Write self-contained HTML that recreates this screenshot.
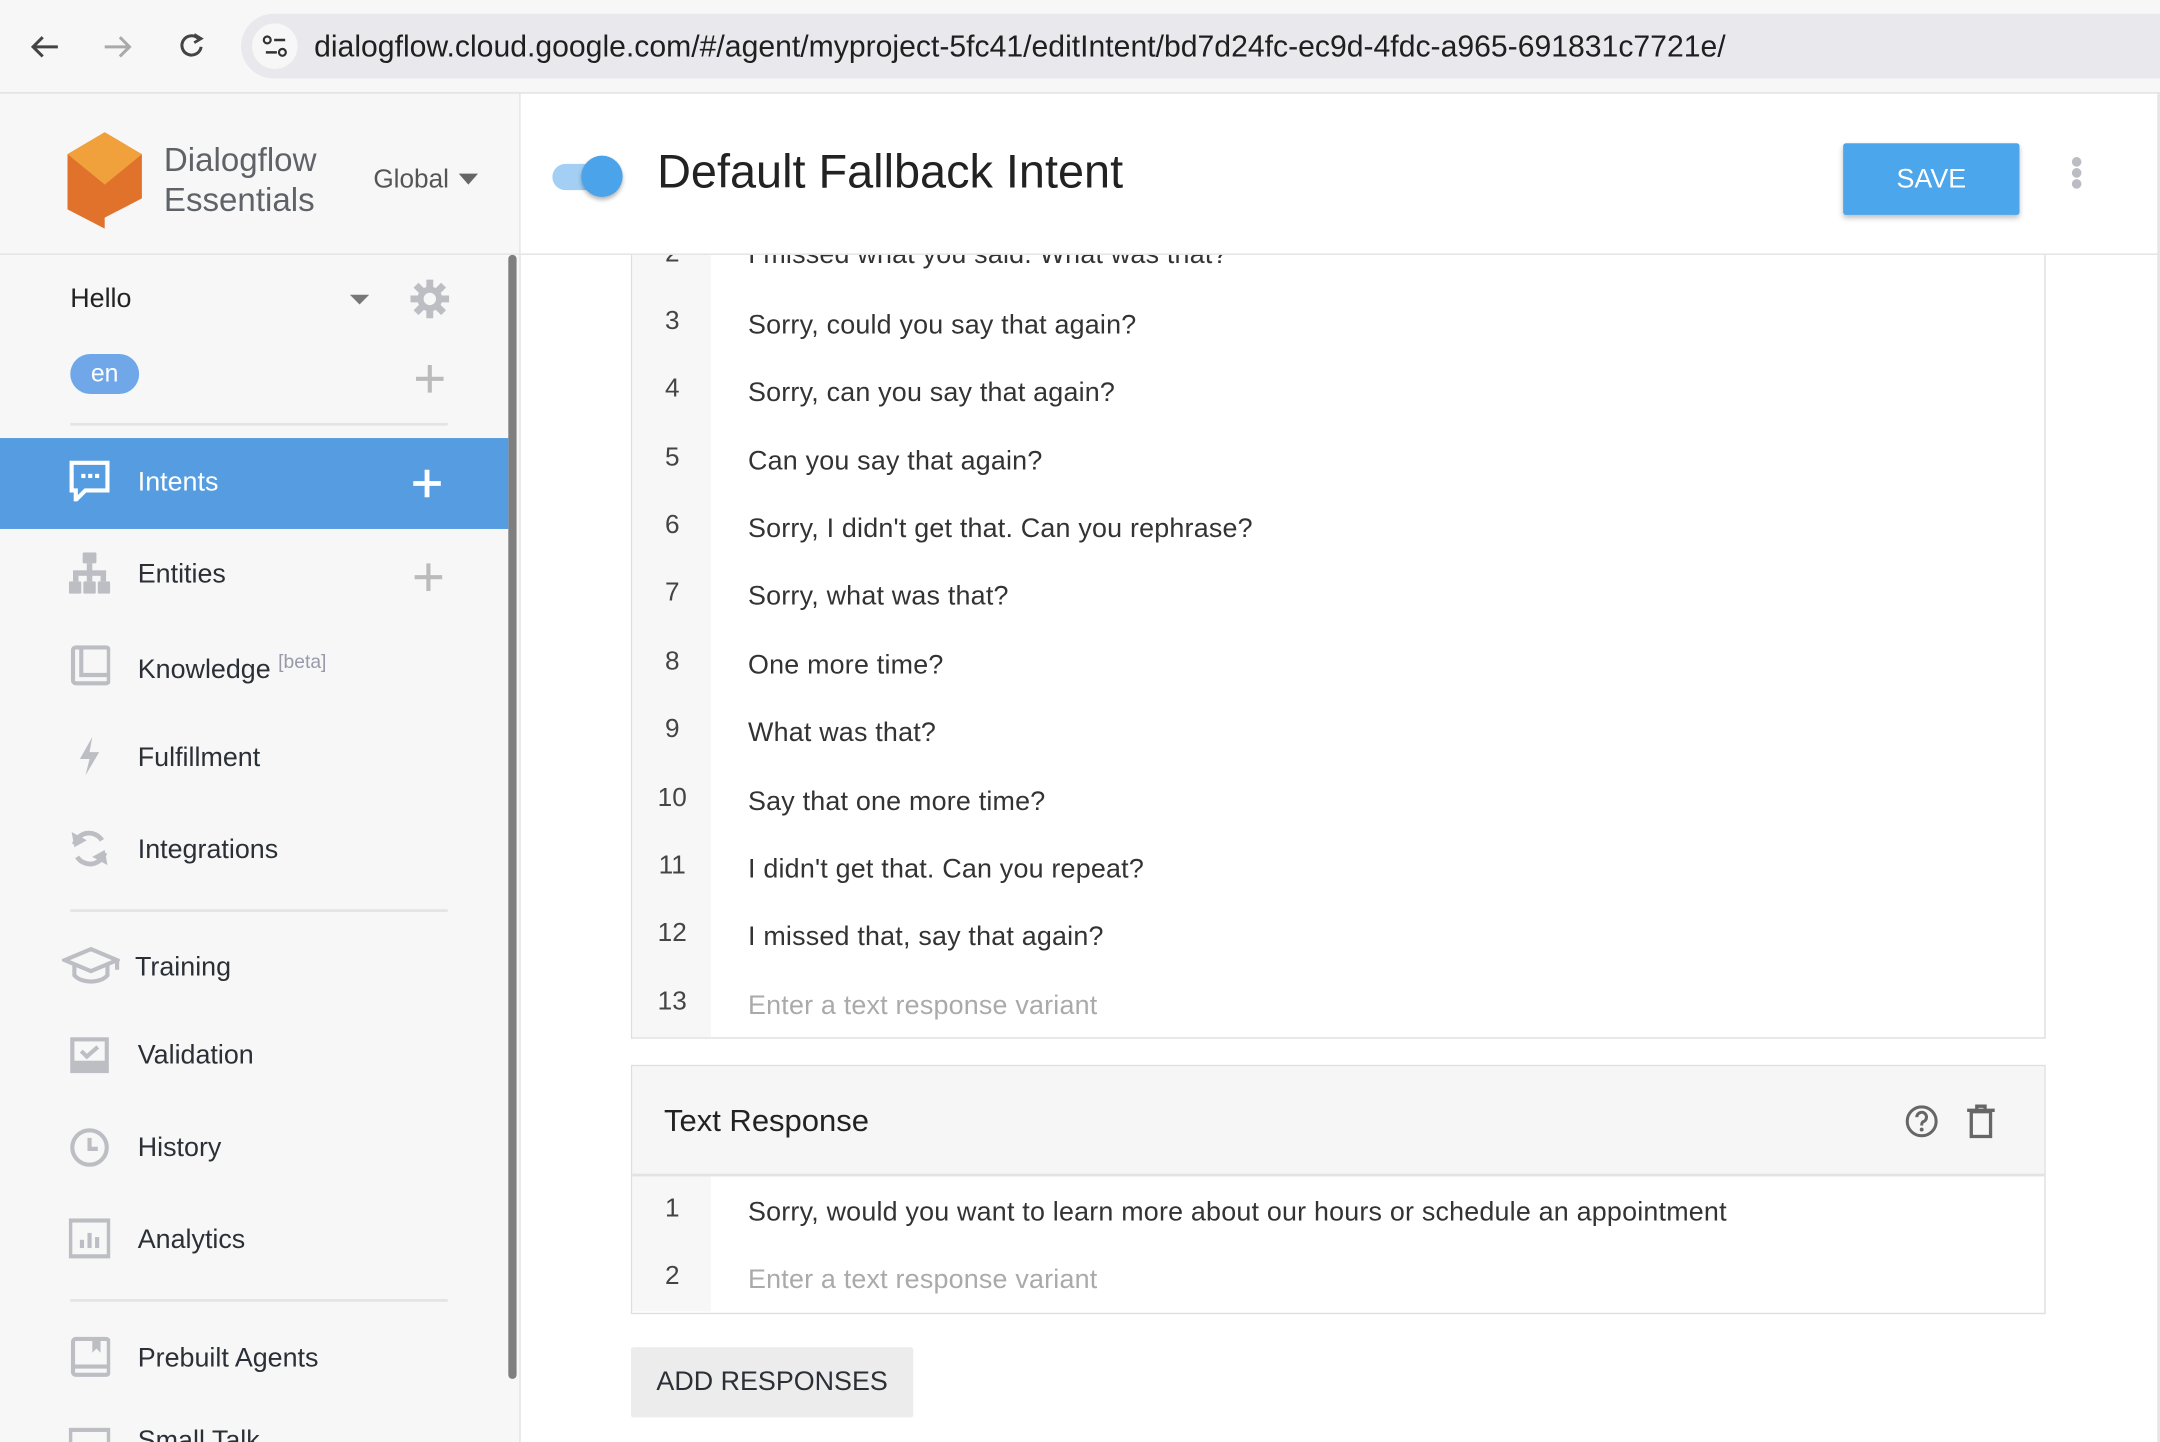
<!DOCTYPE html>
<html><head><meta charset="utf-8">
<style>
html,body{margin:0;padding:0;width:2160px;height:1442px;overflow:hidden;background:#fff;}
#s{position:absolute;left:0;top:0;width:1568px;height:1047px;transform:scale(1.37755);transform-origin:0 0;font-family:"Liberation Sans",sans-serif;color:#222;overflow:hidden;}
.a{position:absolute;}
.t{position:absolute;white-space:nowrap;}
.nav{font-size:19.5px;color:#2b2f36;left:100px;margin-top:1px;}
.ic{position:absolute;left:50px;width:30px;height:30px;}
.num{position:absolute;left:458px;width:60px;text-align:center;font-size:19px;color:#444;margin-top:2px;}
.row{position:absolute;left:543px;font-size:19.5px;letter-spacing:0.15px;color:#333;white-space:nowrap;margin-top:2px;}
.ph{color:#aaa;}
</style></head><body><div id="s">
<div class="a" style="left:0;top:0;width:1568px;height:67px;background:#f8f7f8;border-bottom:1px solid #dedede"></div>
<svg class="a" style="left:20px;top:22px" width="140" height="24" viewBox="0 0 140 24">
<path d="M22 12H4M11 5L4 12L11 19" stroke="#444" stroke-width="2.2" fill="none"/>
<path d="M56 12H74M67 5L74 12L67 19" stroke="#aaa" stroke-width="2.2" fill="none"/>
<path d="M124 6A7 7 0 1 0 126 12" stroke="#444" stroke-width="2.2" fill="none"/><path d="M121 3L126 6L121 9" stroke="#444" stroke-width="2" fill="none"/>
</svg>
<div class="a" style="left:175px;top:10px;width:1420px;height:47px;background:#e9e8ed;border-radius:24px"></div>
<div class="a" style="left:183px;top:17px;width:33px;height:33px;background:#f8f7f8;border-radius:50%"></div>
<svg class="a" style="left:190px;top:24px" width="20" height="20" viewBox="0 0 20 20"><circle cx="4" cy="5" r="2.5" stroke="#333" stroke-width="1.6" fill="none"/><path d="M9 5H17M3 14H11" stroke="#333" stroke-width="1.8"/><circle cx="15" cy="14" r="2.5" stroke="#333" stroke-width="1.6" fill="none"/></svg>
<div class="t" style="left:228px;top:21px;font-size:21.9px;color:#1f1f1f">dialogflow.cloud.google.com/#/agent/myproject-5fc41/editIntent/bd7d24fc-ec9d-4fdc-a965-691831c7721e/</div>

<div class="a" style="left:0;top:68px;width:377px;height:990px;background:#f7f7f7;border-right:1px solid #e2e2e2"></div>
<div class="a" style="left:0;top:184px;width:377px;height:1px;background:#e2e2e2"></div>
<svg class="a" style="left:48px;top:96px" width="56" height="70" viewBox="0 0 56 70">
<path d="M28 0L55 16V48L28 62V70L1 56V16Z" fill="#e0722c"/>
<path d="M28 0L55 16L28 38L1 16Z" fill="#f0a13c"/>
<path d="M1 16L28 38V62L1 48Z" fill="#e0722c"/>
</svg>
<div class="t" style="left:119px;top:102px;font-size:24px;line-height:29px;color:#5f6368">Dialogflow<br>Essentials</div>
<div class="t" style="left:271px;top:120px;font-size:19px;color:#555">Global</div>
<div class="a" style="left:333px;top:126px;border-left:7px solid transparent;border-right:7px solid transparent;border-top:8px solid #666"></div>

<div class="a" style="left:369px;top:185px;width:6px;height:816px;background:#7f7f7f;border-radius:3px"></div>

<div class="t" style="left:51px;top:206px;font-size:19.5px;color:#222">Hello</div>
<div class="a" style="left:254px;top:214px;border-left:7px solid transparent;border-right:7px solid transparent;border-top:7px solid #777"></div>
<svg class="a" style="left:296px;top:201px" width="32" height="32" viewBox="0 0 32 32"><g stroke="#bcbec4" stroke-width="5"><path d="M16 2V30M2 16H30M6 6L26 26M26 6L6 26"/></g><circle cx="16" cy="16" r="9" fill="#bcbec4"/><circle cx="16" cy="16" r="4.5" fill="#f7f7f7"/></svg>
<div class="a" style="left:51px;top:257px;width:50px;height:29px;background:#6fa7e8;border-radius:15px;color:#fff;font-size:18px;text-align:center;line-height:29px">en</div>
<svg class="a" style="left:301px;top:264px" width="22" height="22"><path d="M11 1V21M1 11H21" stroke="#bbb" stroke-width="3"/></svg>
<div class="a" style="left:51px;top:307px;width:274px;height:2px;background:#e4e4e4"></div>

<div class="a" style="left:0;top:318px;width:369px;height:66px;background:#559de0"></div>
<svg class="ic" style="top:334px" viewBox="0 0 30 30"><path d="M2 2H28V22H12L5 29V22H2Z" fill="none" stroke="#fff" stroke-width="3"/><rect x="9" y="10" width="3" height="3" fill="#fff"/><rect x="14" y="10" width="3" height="3" fill="#fff"/><rect x="19" y="10" width="3" height="3" fill="#fff"/></svg>
<div class="t nav" style="top:338px;color:#fff">Intents</div>
<svg class="a" style="left:299px;top:340px" width="22" height="22"><path d="M11 1V21M1 11H21" stroke="#fff" stroke-width="3.5"/></svg>

<svg class="ic" style="top:401px" viewBox="0 0 30 30"><g fill="#bcbec4"><rect x="10" y="0" width="10" height="8" rx="1"/><rect x="13" y="8" width="4" height="7"/><rect x="3" y="13" width="24" height="4"/><rect x="3" y="15" width="4" height="6"/><rect x="23" y="15" width="4" height="6"/><rect x="13" y="15" width="4" height="6"/><rect x="0" y="21" width="9" height="9" rx="1"/><rect x="10.5" y="21" width="9" height="9" rx="1"/><rect x="21" y="21" width="9" height="9" rx="1"/></g></svg>
<div class="t nav" style="top:405px">Entities</div>
<svg class="a" style="left:300px;top:408px" width="22" height="22"><path d="M11 1V21M1 11H21" stroke="#bbb" stroke-width="3"/></svg>

<svg class="ic" style="top:468px" viewBox="0 0 30 30"><rect x="3" y="2" width="26" height="26" rx="2" fill="none" stroke="#bcbec4" stroke-width="3"/><path d="M9 2V22H29" stroke="#bcbec4" stroke-width="3" fill="none"/></svg>
<div class="t nav" style="top:471px">Knowledge <span style="font-size:14px;color:#99a;vertical-align:7px">[beta]</span></div>

<svg class="ic" style="top:534px" viewBox="0 0 30 30"><path d="M17 1L8 17H15L12 29L22 12H15Z" fill="#bcbec4"/></svg>
<div class="t nav" style="top:538px">Fulfillment</div>

<svg class="ic" style="top:601px" viewBox="0 0 30 30"><path d="M24 9A11 11 0 0 0 4 12M6 21A11 11 0 0 0 26 18" stroke="#bcbec4" stroke-width="3.5" fill="none"/><path d="M2 3L4 14L13 9Z" fill="#bcbec4"/><path d="M28 27L26 16L17 21Z" fill="#bcbec4"/></svg>
<div class="t nav" style="top:605px">Integrations</div>
<div class="a" style="left:51px;top:660px;width:274px;height:2px;background:#e4e4e4"></div>

<svg class="a" style="left:45px;top:686px" width="42" height="30" viewBox="0 0 42 30"><path d="M21 3L2 11L21 19L40 11Z" fill="none" stroke="#bcbec4" stroke-width="3"/><path d="M9 15V22C14 28 28 28 33 22V15" fill="none" stroke="#bcbec4" stroke-width="3"/><path d="M40 11V18" stroke="#bcbec4" stroke-width="3"/></svg>
<div class="t nav" style="top:690px;left:98px">Training</div>
<svg class="ic" style="top:751px" viewBox="0 0 30 30"><rect x="1" y="2" width="28" height="26" fill="#bcbec4"/><rect x="4" y="5" width="22" height="14" fill="#f7f7f7"/><path d="M9 12L13 16L21 9" stroke="#bcbec4" stroke-width="3" fill="none"/></svg>
<div class="t nav" style="top:754px">Validation</div>
<svg class="ic" style="top:818px" viewBox="0 0 30 30"><circle cx="15" cy="15" r="12.5" fill="none" stroke="#bcbec4" stroke-width="3"/><path d="M15 8V16H21" stroke="#bcbec4" stroke-width="3" fill="none"/></svg>
<div class="t nav" style="top:821px">History</div>
<svg class="ic" style="top:884px" viewBox="0 0 30 30"><rect x="1" y="2" width="28" height="26" fill="none" stroke="#bcbec4" stroke-width="3"/><rect x="8" y="16" width="3" height="6" fill="#bcbec4"/><rect x="13.5" y="11" width="3" height="11" fill="#bcbec4"/><rect x="19" y="14" width="3" height="8" fill="#bcbec4"/></svg>
<div class="t nav" style="top:888px">Analytics</div>
<div class="a" style="left:51px;top:943px;width:274px;height:2px;background:#e4e4e4"></div>
<svg class="ic" style="top:970px" viewBox="0 0 30 30"><rect x="3" y="2" width="26" height="26" rx="2" fill="none" stroke="#bcbec4" stroke-width="3"/><path d="M3 22H29" stroke="#bcbec4" stroke-width="3"/><path d="M17 2V12L20 9L23 12V2Z" fill="#bcbec4"/></svg>
<div class="t nav" style="top:974px">Prebuilt Agents</div>
<svg class="ic" style="top:1036px" viewBox="0 0 30 30"><rect x="1" y="2" width="28" height="26" fill="none" stroke="#bcbec4" stroke-width="3"/></svg>
<div class="t nav" style="top:1034px">Small Talk</div>

<div class="a" style="left:378px;top:68px;width:1188px;height:116px;background:#fff;border-bottom:1px solid #e2e2e2;border-right:2px solid #e6e6e6;z-index:2"></div>
<div class="a" style="left:401px;top:119px;width:44px;height:19px;background:#a3cff5;border-radius:10px;z-index:3"></div>
<div class="a" style="left:422px;top:113px;width:30px;height:30px;background:#4ba3ea;border-radius:50%;box-shadow:0 2px 3px rgba(0,0,0,.3);z-index:3"></div>
<div class="t" style="left:477px;top:106px;font-size:34px;color:#222;z-index:3">Default Fallback Intent</div>
<div class="a" style="left:1338px;top:104px;width:128px;height:52px;background:#4ba6ec;border-radius:2px;box-shadow:0 2px 4px rgba(0,0,0,.25);color:#fff;font-size:19.5px;text-align:center;line-height:52px;z-index:3">SAVE</div>
<div class="a" style="left:1504px;top:114px;width:7px;height:7px;background:#bcbcc4;border-radius:50%;z-index:3"></div>
<div class="a" style="left:1504px;top:122px;width:7px;height:7px;background:#bcbcc4;border-radius:50%;z-index:3"></div>
<div class="a" style="left:1504px;top:130px;width:7px;height:7px;background:#bcbcc4;border-radius:50%;z-index:3"></div>
<div class="a" style="left:1566px;top:184px;width:2px;height:870px;background:#e6e6e6"></div>

<div class="a" style="left:458px;top:150px;width:1025px;height:603px;border:1px solid #dedede;border-top:none;background:#fff"></div>
<div class="a" style="left:459px;top:150px;width:57px;height:603px;background:#f7f7f7"></div>
<div class="num" style="top:172px">2</div><div class="row" style="top:172px">I missed what you said. What was that?</div>
<div class="num" style="top:221px">3</div><div class="row" style="top:223px">Sorry, could you say that again?</div>
<div class="num" style="top:270px">4</div><div class="row" style="top:272px">Sorry, can you say that again?</div>
<div class="num" style="top:320px">5</div><div class="row" style="top:322px">Can you say that again?</div>
<div class="num" style="top:369px">6</div><div class="row" style="top:371px">Sorry, I didn't get that. Can you rephrase?</div>
<div class="num" style="top:418px">7</div><div class="row" style="top:420px">Sorry, what was that?</div>
<div class="num" style="top:468px">8</div><div class="row" style="top:470px">One more time?</div>
<div class="num" style="top:517px">9</div><div class="row" style="top:519px">What was that?</div>
<div class="num" style="top:567px">10</div><div class="row" style="top:569px">Say that one more time?</div>
<div class="num" style="top:616px">11</div><div class="row" style="top:618px">I didn't get that. Can you repeat?</div>
<div class="num" style="top:665px">12</div><div class="row" style="top:667px">I missed that, say that again?</div>
<div class="num" style="top:715px">13</div><div class="row ph" style="top:717px">Enter a text response variant</div>

<div class="a" style="left:458px;top:773px;width:1025px;height:179px;border:1px solid #dedede;background:#fff"></div>
<div class="a" style="left:459px;top:774px;width:1025px;height:78px;background:#f6f6f6;border-bottom:2px solid #e2e2e2"></div>
<div class="t" style="left:482px;top:801px;font-size:22.5px;color:#222">Text Response</div>
<svg class="a" style="left:1382px;top:801px" width="70" height="26" viewBox="0 0 70 26"><circle cx="13" cy="13" r="10.5" fill="none" stroke="#666" stroke-width="2.2"/><path d="M9.5 10A3.5 3.5 0 1 1 14 13.3C13 13.8 13 15 13 16" fill="none" stroke="#666" stroke-width="2.2"/><circle cx="13" cy="19" r="1.4" fill="#666"/><rect x="49" y="6" width="14" height="18" fill="none" stroke="#666" stroke-width="2.4"/><path d="M46 5H66M53 5V2H59V5" stroke="#666" stroke-width="2.4" fill="none"/></svg>
<div class="a" style="left:459px;top:854px;width:57px;height:98px;background:#f7f7f7"></div>
<div class="num" style="top:865px">1</div><div class="row" style="top:867px">Sorry, would you want to learn more about our hours or schedule an appointment</div>
<div class="num" style="top:914px">2</div><div class="row ph" style="top:916px">Enter a text response variant</div>

<div class="a" style="left:458px;top:978px;width:205px;height:51px;background:#ececec;border-radius:2px;font-size:19.5px;color:#2b2f36;text-align:center;line-height:51px">ADD RESPONSES</div>
</div></body></html>
